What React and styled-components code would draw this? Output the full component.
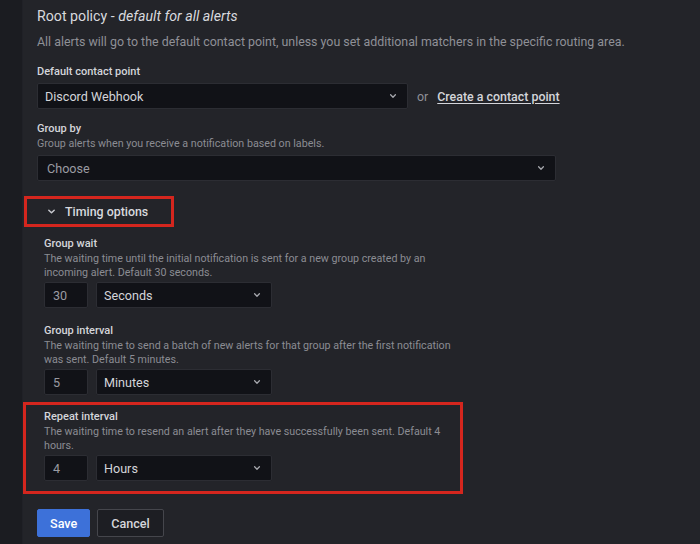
import React from "react";
import styled, { createGlobalStyle } from "styled-components";

const Global = createGlobalStyle`
  html, body { margin: 0; padding: 0; background: #232429; }
  body { font-family: Roboto, Inter, "Noto Sans", sans-serif; overflow: hidden; }
  * { box-sizing: border-box; }
`;

const Page = styled.div`
  display: flex;
  width: 700px;
  height: 544px;
  background: #232429;
`;

const Sidebar = styled.div`
  width: 23px;
  flex: none;
  background: #1b1c21;
  border-right: 1px solid #202127;
`;

const Main = styled.div`
  flex: 1;
  padding: 6px 0 0 14px;
  display: flex;
  flex-direction: column;
`;

const Title = styled.h2`
  margin: 0;
  font-size: 14.2px;
  line-height: 20px;
  font-weight: 400;
  color: #d8d9de;
  em { font-style: italic; }
`;

const Lead = styled.p`
  margin: 8px 0 0;
  font-size: 12.4px;
  line-height: 16px;
  color: #8f9097;
`;

const Field = styled.div`
  display: flex;
  flex-direction: column;
  margin-top: ${(p) => p.$mt || 0}px;
`;

const Label = styled.div`
  font-size: 11px;
  line-height: 16px;
  font-weight: 500;
  color: #d4d5da;
`;

const Desc = styled.div`
  font-size: 10.7px;
  line-height: 14px;
  color: #8b8c93;
  max-width: ${(p) => p.$max || 600}px;
`;

const Row = styled.div`
  display: flex;
  align-items: center;
  gap: ${(p) => p.$gap || 8}px;
  margin-top: ${(p) => p.$mt || 3}px;
`;

const SelectBox = styled.div`
  width: ${(p) => p.$w}px;
  height: 26px;
  background: #111217;
  border: 1px solid #2c2d33;
  border-radius: 2px;
  display: flex;
  align-items: center;
  justify-content: space-between;
  padding: 0 ${(p) => p.$pr || 10}px 0 ${(p) => p.$pl || 7}px;
  font-size: 12.6px;
  color: ${(p) => (p.$placeholder ? "#9a9ba2" : "#d4d5da")};
`;

const NumInput = styled.div`
  width: 44px;
  height: 26px;
  background: #111217;
  border: 1px solid #2c2d33;
  border-radius: 2px;
  display: flex;
  align-items: center;
  padding-left: 8px;
  font-size: 12.6px;
  color: #9a9ba2;
`;

const Or = styled.span`
  font-size: 12.4px;
  color: #8f9097;
`;

const Link = styled.a`
  font-size: 12.4px;
  font-weight: 500;
  color: #d4d5da;
  text-decoration: underline;
  text-underline-offset: 2px;
`;

const TimingToggle = styled.div`
  margin: 15px 0 0 -13px;
  width: 150px;
  height: 31px;
  border: 3px solid #d4261e;
  display: flex;
  align-items: center;
  padding-left: 20px;
  gap: 9px;
  font-size: 12.4px;
  font-weight: 500;
  color: #d8d9de;
`;

const Timing = styled.div`
  display: flex;
  flex-direction: column;
  padding-left: 7px;
`;

const Highlight = styled.div`
  margin: 7px 0 0 -21px;
  width: 440px;
  border: 3px solid #d4261e;
  padding: 4px 0 10px 18px;
  display: flex;
  flex-direction: column;
`;

const Actions = styled.div`
  display: flex;
  gap: 7px;
  margin-top: 15px;
`;

const Button = styled.button`
  height: 28px;
  padding: 0 ${(p) => p.$px}px;
  font-family: inherit;
  font-size: 12.6px;
  font-weight: 500;
  border-radius: 2px;
  cursor: pointer;
  background: ${(p) => (p.$primary ? "#3d71d9" : "#1d1e23")};
  color: ${(p) => (p.$primary ? "#ffffff" : "#d4d5da")};
  border: 1px solid ${(p) => (p.$primary ? "#3d71d9" : "#45464c")};
`;

const Chevron = ({ size = 8, color = "#a7a8ae" }) => (
  <svg width={size} height={size} viewBox="0 0 10 10" fill="none">
    <path d="M2 3.5 L5 6.5 L8 3.5" stroke={color} strokeWidth="1.6" strokeLinecap="round" strokeLinejoin="round" />
  </svg>
);

const TimeField = ({ label, desc, num, unit, mt }) => (
  <Field $mt={mt}>
    <Label>{label}</Label>
    <Desc $max={415}>{desc}</Desc>
    <Row $mt={2}>
      <NumInput>{num}</NumInput>
      <SelectBox $w={176}>
        {unit}
        <Chevron />
      </SelectBox>
    </Row>
  </Field>
);

export default function App() {
  return (
    <>
      <Global />
      <Page>
        <Sidebar />
        <Main>
          <Title>
            Root policy - <em>default for all alerts</em>
          </Title>
          <Lead>
            All alerts will go to the default contact point, unless you set additional matchers in the specific routing area.
          </Lead>
          <Field $mt={14}>
            <Label>Default contact point</Label>
            <Row $mt={3} $gap={9}>
              <SelectBox $w={371}>
                Discord Webhook
                <Chevron />
              </SelectBox>
              <Or>or</Or>
              <Link>Create a contact point</Link>
            </Row>
          </Field>
          <Field $mt={12}>
            <Label>Group by</Label>
            <Desc>Group alerts when you receive a notification based on labels.</Desc>
            <Row $mt={4}>
              <SelectBox $w={519} $pl={9} $placeholder>
                Choose
                <Chevron />
              </SelectBox>
            </Row>
          </Field>
          <TimingToggle>
            <Chevron size={9} color="#c8c9cf" />
            Timing options
          </TimingToggle>
          <Timing>
            <TimeField
              mt={9}
              label="Group wait"
              desc="The waiting time until the initial notification is sent for a new group created by an incoming alert. Default 30 seconds."
              num="30"
              unit="Seconds"
            />
            <TimeField
              mt={15}
              label="Group interval"
              desc="The waiting time to send a batch of new alerts for that group after the first notification was sent. Default 5 minutes."
              num="5"
              unit="Minutes"
            />
            <Highlight>
              <TimeField
                label="Repeat interval"
                desc="The waiting time to resend an alert after they have successfully been sent. Default 4 hours."
                num="4"
                unit="Hours"
              />
            </Highlight>
          </Timing>
          <Actions>
            <Button $primary $px={12}>Save</Button>
            <Button $px={13}>Cancel</Button>
          </Actions>
        </Main>
      </Page>
    </>
  );
}
